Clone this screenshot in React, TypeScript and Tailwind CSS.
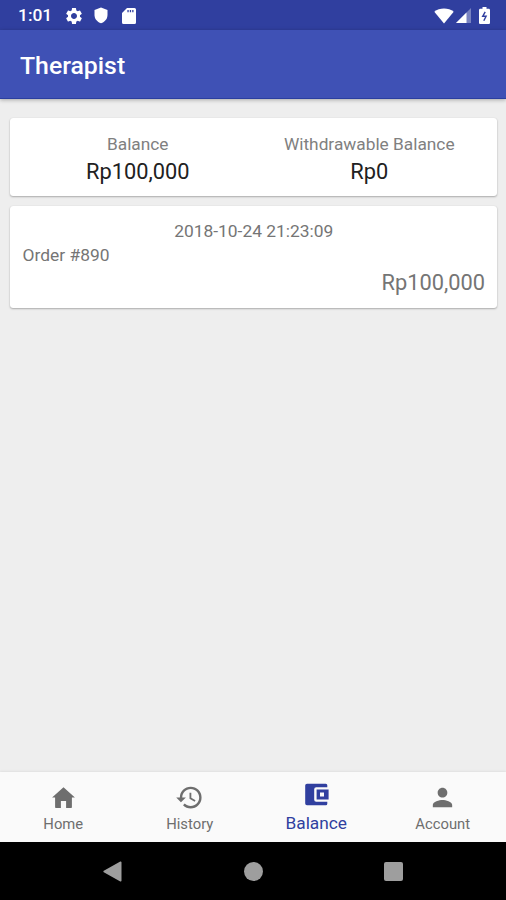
import type { ReactNode } from 'react'
import { MdHistory, MdPerson, MdSettings } from 'react-icons/md'

function HomeIcon({ className }: { className?: string }) {
  return (
    <svg className={className} viewBox="0 0 29 29" fill="currentColor">
      <path d="M14.500 4.300 25.900 14.500h-3v9.700c0 .4-.3.700-.7.700h-5.100v-7h-5.200v7H6.800c-.4 0-.7-.3-.7-.7v-9.700h-3z" />
    </svg>
  )
}

function WalletIcon({ className }: { className?: string }) {
  return (
    <svg className={className} viewBox="0 0 29 29" fill="currentColor">
      <path d="M5 3.700h18.800a1.500 1.500 0 0 1 1.500 1.500v2H14.200a2 2 0 0 0-2 2v10.600a2 2 0 0 0 2 2h11.100v2a1.500 1.500 0 0 1-1.500 1.500H5a1.800 1.800 0 0 1-1.800-1.800v-18a1.800 1.800 0 0 1 1.800-1.800z" />
      <path fillRule="evenodd" d="M14.600 9.600h12v9.800h-12zM18 12.500v4h4v-4z" />
    </svg>
  )
}

const tabs = [
  { label: 'Home', icon: HomeIcon, active: false },
  { label: 'History', icon: MdHistory, active: false },
  { label: 'Balance', icon: WalletIcon, active: true },
  { label: 'Account', icon: MdPerson, active: false },
]

const transactions = [
  { id: 890, date: '2018-10-24 21:23:09', amount: 'Rp100,000' },
]

function StatusBar() {
  return (
    <div className="flex h-[30px] shrink-0 items-center bg-[#303f9f] pl-[18px] pr-[16px] pt-px text-white">
      <span className="w-[46px] text-[17.4px] font-medium leading-none">1:01</span>
      <MdSettings className="h-[20px] w-[20px]" />
      <svg className="ml-[10px] h-[17px] w-[14px]" viewBox="0 0 14 17" fill="currentColor">
        <path d="M7 .5 13.500 3v5c0 3.700-2.600 6.900-6.500 8.300C3.100 14.900.5 11.700.5 8V3z" />
      </svg>
      <svg className="ml-[14px] h-4 w-[14px]" viewBox="0 0 14 16" fill="currentColor">
        <path
          fillRule="evenodd"
          d="M5 0h7.500A1.500 1.500 0 0 1 14 1.500v13a1.500 1.500 0 0 1-1.500 1.500h-11A1.500 1.500 0 0 1 0 14.500V5zm.4 2v2.200h1.300V2zm2.400 0v2.200h1.300V2zm2.400 0v2.200h1.300V2z"
        />
      </svg>
      <div className="ml-auto flex items-center">
        <svg className="h-4 w-5" viewBox="0 0 20 16" fill="currentColor">
          <path d="M10 15.500.3 3.700C3 1.600 6.300.5 10 .5s7 1.100 9.700 3.200z" />
        </svg>
        <svg className="ml-0.5 h-[15px] w-[15px]" viewBox="0 0 15 15" fill="currentColor">
          <path d="M15 0v15H0z" opacity=".35" />
          <path d="M10.500 4.500V15H0z" />
        </svg>
        <svg className="ml-[8px] h-[17px] w-[11px]" viewBox="0 0 11 17">
          <path
            d="M3.500 0h4v1.800h2.200c.7 0 1.300.6 1.300 1.300v12.600c0 .7-.6 1.300-1.300 1.300H1.300C.6 17 0 16.400 0 15.700V3.100c0-.7.6-1.300 1.300-1.300h2.200z"
            fill="currentColor"
          />
          <path d="M6.200 4.800 3.700 9.300h3.400L4.800 13.800" fill="none" stroke="#303f9f" strokeWidth="1.400" />
        </svg>
      </div>
    </div>
  )
}

function Card({ className, children }: { className: string; children: ReactNode }) {
  return (
    <section
      className={`rounded-[3px] bg-white shadow-[0_1px_2px_rgba(0,0,0,0.28),0_0_1px_rgba(0,0,0,0.12)] ${className}`}
    >
      {children}
    </section>
  )
}

function BalanceItem({ label, value }: { label: string; value: string }) {
  return (
    <div className="flex-1 text-center">
      <p className="text-[17.3px] leading-[26px] text-[#808080]">{label}</p>
      <p className="text-[21.8px] leading-[30px] text-[#212121]">{value}</p>
    </div>
  )
}

export default function App() {
  return (
    <div className="flex h-[900px] w-[506px] flex-col overflow-hidden bg-[#eeeeee] font-['Roboto',sans-serif]">
      <StatusBar />

      {/* App bar */}
      <header className="z-10 flex h-[69px] shrink-0 items-center border-b border-[#2b3f9f] bg-[#3f51b5] px-5 pt-[3px] shadow-[0_1px_4px_rgba(0,0,0,0.3)]">
        <h1 className="text-[24.8px] font-medium text-white">Therapist</h1>
      </header>

      <main className="flex flex-1 flex-col gap-[10px] pl-[10px] pr-[9px] pt-[19px]">
        <Card className="flex h-[78px] px-3 pt-[12.5px]">
          <BalanceItem label="Balance" value="Rp100,000" />
          <BalanceItem label="Withdrawable Balance" value="Rp0" />
        </Card>

        {transactions.map((item) => (
          <Card key={item.id} className="h-[102px] pl-[12.5px] pr-3 pt-3 text-[#757575]">
            <p className="text-center text-[17.4px] leading-[26px]">{item.date}</p>
            <p className="text-[17.4px] leading-[22px]">Order #{item.id}</p>
            <p className="text-right text-[21.8px] leading-[34px]">{item.amount}</p>
          </Card>
        ))}
      </main>

      {/* Bottom navigation */}
      <nav className="flex h-[70px] shrink-0 bg-[#fafafa] shadow-[0_-1px_2px_rgba(0,0,0,0.06)]">
        {tabs.map(({ label, icon: Icon, active }) => (
          <button
            key={label}
            className={`flex flex-1 flex-col items-center ${active ? 'pt-2 text-[#303f9f]' : 'pt-[11px] text-[#6e6e6e]'}`}
          >
            <Icon className="h-[29px] w-[29px]" />
            <span className={active ? 'mt-1 text-[17.3px] leading-5' : 'mt-[3px] text-[14.8px] leading-[18px]'}>{label}</span>
          </button>
        ))}
      </nav>

      {/* System buttons */}
      <div className="flex h-[58px] shrink-0 items-center justify-between bg-black px-[103px] text-[#9e9e9e]">
        <svg className="h-[21px] w-[19px]" viewBox="0 0 19 21" fill="currentColor">
          <path d="M18.500 1.300v18.400c0 .7-.7 1-1.200.7L.8 11.200a.8.8 0 0 1 0-1.400L17.300.6c.5-.3 1.200 0 1.200.7z" />
        </svg>
        <span className="h-[19px] w-[19px] rounded-full bg-[#9e9e9e]" />
        <span className="h-[19px] w-[19px] rounded-[2px] bg-[#9e9e9e]" />
      </div>
    </div>
  )
}
